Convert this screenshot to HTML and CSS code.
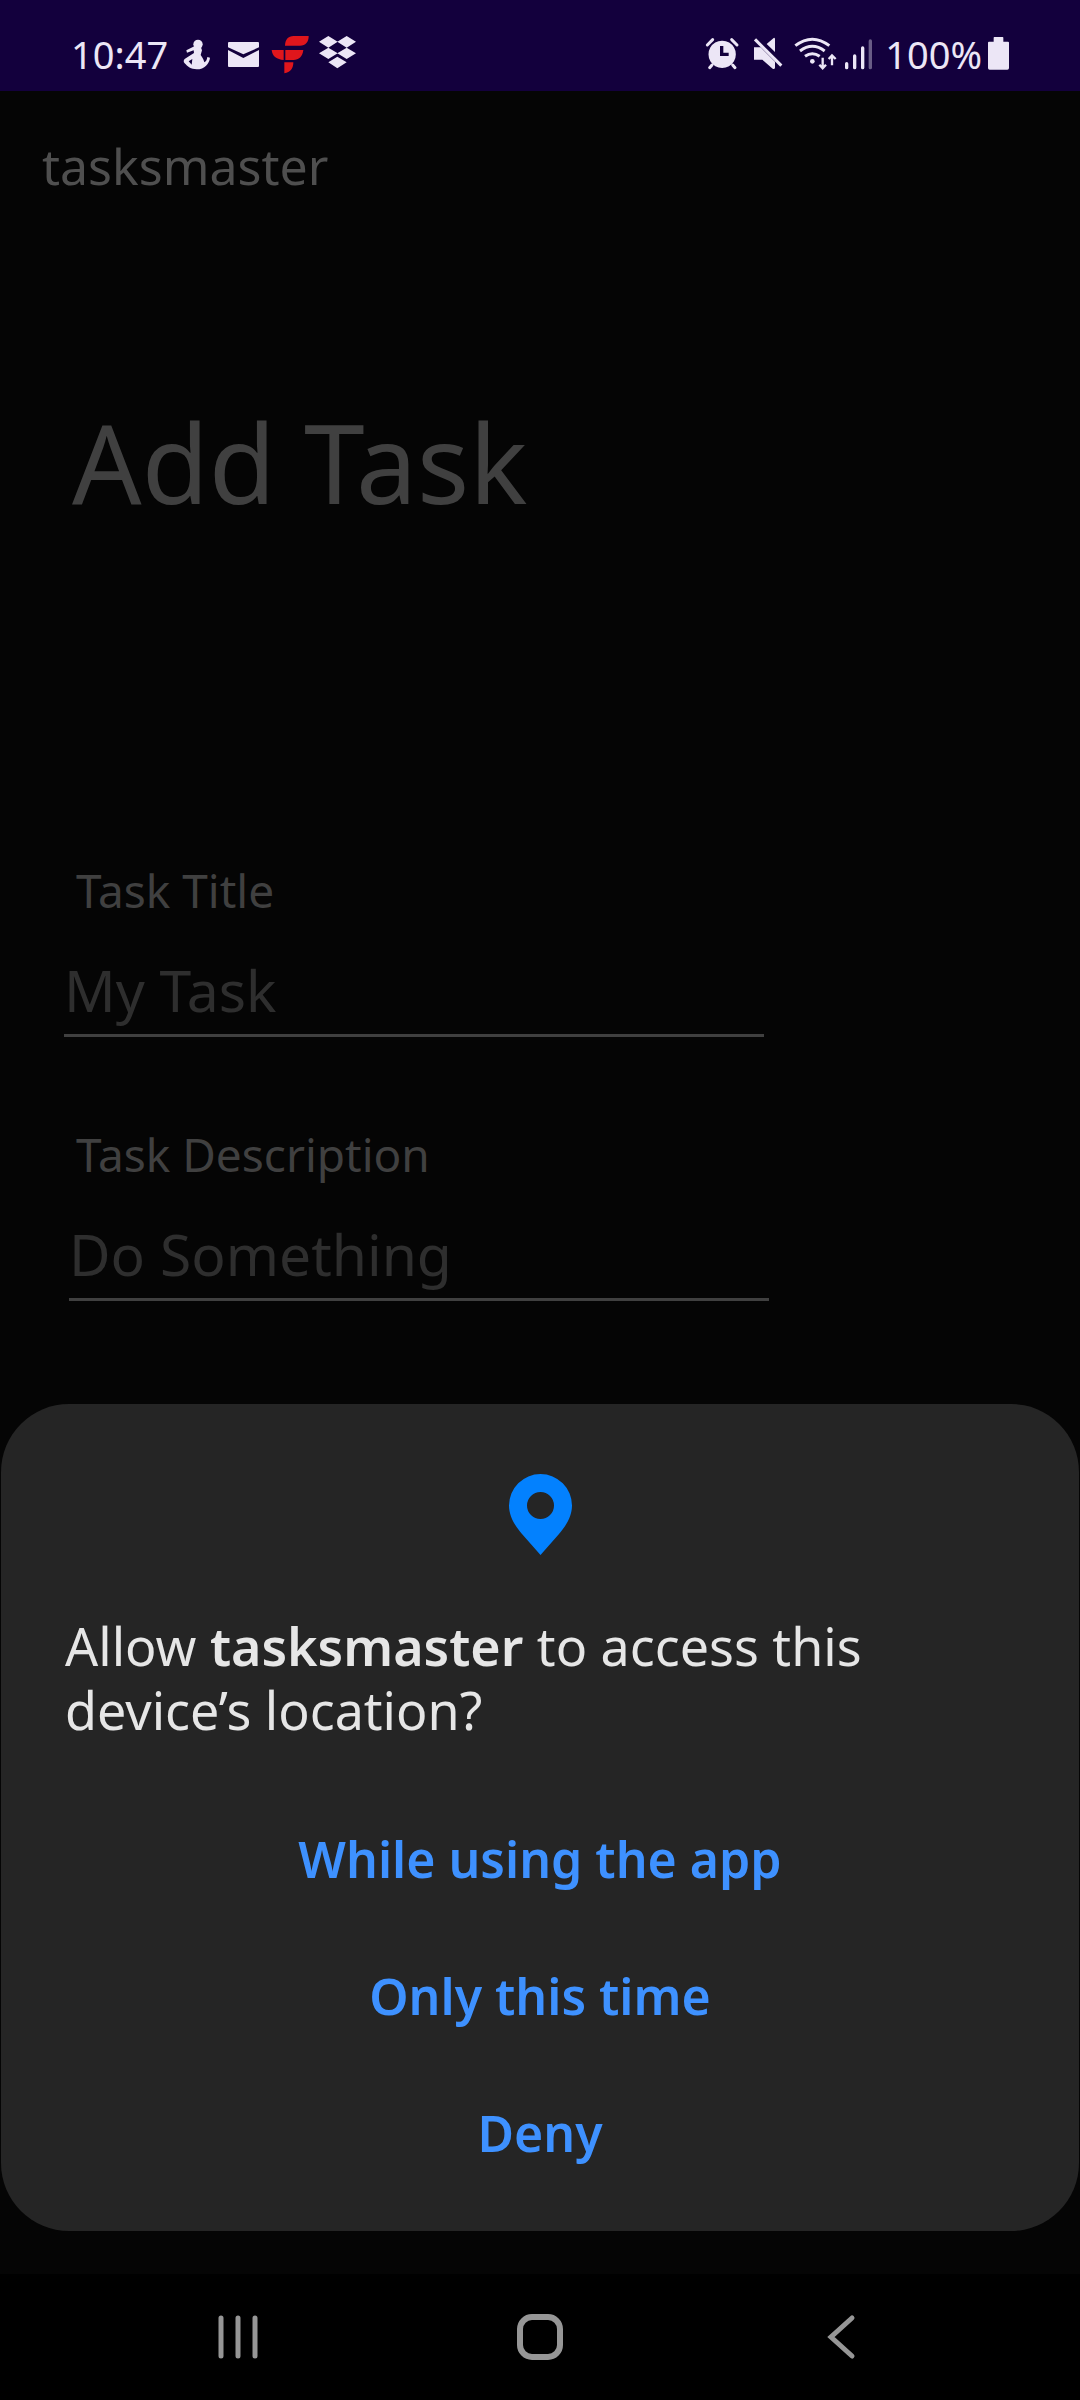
FILE: index.html
```html
<!DOCTYPE html>
<html lang="en">
<head>
<meta charset="utf-8">
<meta name="viewport" content="width=device-width, initial-scale=1">
<title>tasksmaster</title>
<link rel="stylesheet" href="styles.css">
</head>
<body>
<header class="status-bar">
  <div class="status-group">
    <time class="status-text status-time">10:47</time>
    <svg class="icon-notice" viewBox="402 99 141 123" aria-hidden="true">
      <circle cx="477" cy="133" r="14"/>
      <path d="M466 139l-24 12 2 7 20-7 1 8-27 17c-5 4-5 9-1 14 8 9 19 18 36 18 24 0 38-17 40-35l-8-2c-1 8-4 14-9 16-3-12-7-16-11-22l4-14-5-14zM449 184l11-7-2 17z" fill-rule="evenodd"/>
    </svg>
    <svg class="icon-notice" viewBox="543 99 141 123" aria-hidden="true">
      <path d="M570 126h87q3 0 3 3v13l-47 21-46-21v-13q0-3 3-3zM567 150l46 24 47-24v48q0 3-3 3h-87q-3 0-3-3z"/>
    </svg>
    <svg class="icon-notice icon-red" viewBox="684 99 141 123" aria-hidden="true">
      <path d="M738 137c1-18 9-29 26-29h45c0 18-9 29-26 29zM698 150h36v30c-20-2-34-10-36-30zM739 150h54c-2 20-14 30-29 30h-25zM736 187h27c0 19-9 30-27 33z"/>
    </svg>
    <svg class="icon-notice" viewBox="825 99 141 123" aria-hidden="true">
      <path d="M868 108l28 17-28 18-28-18zM923 108l28 17-28 18-28-18zM868 143l28 17-28 17-28-17zM923 143l28 17-28 17-28-17zM895 170l28 17-28 18-27-18z"/>
    </svg>
  </div>
  <div class="status-group">
    <svg class="icon-notice" viewBox="54 99 141 123" aria-hidden="true">
      <path d="M79 135l16-16M168 135l-16-16M93 195l-7 8M155 195l7 8" fill="none" stroke="#ece6f6" stroke-width="9" stroke-linecap="round"/>
      <path d="M123 122a41 41 0 1 0 1 0zM117 138h10v20h16v10h-26z" fill-rule="evenodd"/>
    </svg>
    <svg class="icon-mute" viewBox="195 99 135 123" aria-hidden="true">
      <path d="M219 142h20l43 43v18q-1 6-7 3l-31-27h-25zM257 132l21-18q4-2 4 4v38z"/>
      <path d="M222 118l79 79" fill="none" stroke="#ece6f6" stroke-width="9"/>
    </svg>
    <svg class="icon-wifi" viewBox="330 99 150 123" aria-hidden="true">
      <g fill="none" stroke="#ece6f6" stroke-width="9">
        <path d="M343 137q51-39 102 0M357 153q37-28 74 0M372 169q22-16 44 0"/>
        <path d="M425 173v31M415 194l10 11 10-11M453 196v-30M443 177l10-11 11 11" stroke-width="7"/>
      </g>
      <circle cx="394" cy="184" r="7"/>
    </svg>
    <svg class="icon-signal" viewBox="480 99 108 123" aria-hidden="true">
      <g fill="none" stroke="#ece6f6" stroke-width="10" stroke-linecap="round">
        <path d="M497 191v12M521 168v35M545 144v59"/><path d="M568 123v80" opacity=".4"/>
      </g>
    </svg>
    <span class="status-text status-charge">100%</span>
    <svg class="icon-battery" viewBox="924 99 63 123" aria-hidden="true">
      <path d="M941 125v-12q0-2 2-2h25q2 0 2 2v12h14q3 0 3 3v76q0 5-5 5h-53q-5 0-5-5v-76q0-3 3-3z"/>
    </svg>
  </div>
</header>

<div class="screen">
  <main class="app">
    <p class="app-name">tasksmaster</p>
    <h1 class="page-title">Add Task</h1>
    <form class="task-form">
      <div class="field">
        <label class="field-label" for="task-title">Task Title</label>
        <input class="field-input" id="task-title" type="text" placeholder="My Task">
      </div>
      <div class="field field-description">
        <label class="field-label" for="task-description">Task Description</label>
        <input class="field-input" id="task-description" type="text" placeholder="Do Something">
      </div>
    </form>
  </main>

  <section class="sheet" role="dialog" aria-labelledby="permission-message">
    <svg class="pin" viewBox="0 0 63 81" aria-hidden="true">
      <path d="M31.500 0A31.500 31.500 0 0 0 0 31.500C0 43 7 53 13 60L31.500 81 50 60C56 53 63 43 63 31.500A31.500 31.500 0 0 0 31.500 0zM31.500 18a13 13 0 1 1 0 27 13 13 0 1 1 0-27z" fill-rule="evenodd"/>
    </svg>
    <p class="message" id="permission-message">Allow <strong class="message-app">tasksmaster</strong> to access this device’s location?</p>
    <div class="choices">
      <button class="choice" type="button">While using the app</button>
      <button class="choice" type="button">Only this time</button>
      <button class="choice" type="button">Deny</button>
    </div>
  </section>
</div>

<nav class="nav-bar">
  <button class="nav-button" type="button" aria-label="Recent apps">
    <svg class="nav-icon" viewBox="0 0 48 48"><path d="M7 5v38M24 5v38M41 5v38" stroke-width="5"/></svg>
  </button>
  <button class="nav-button" type="button" aria-label="Home">
    <svg class="nav-icon" viewBox="0 0 48 48"><rect x="4" y="4" width="40" height="40" rx="12" stroke-width="6"/></svg>
  </button>
  <button class="nav-button" type="button" aria-label="Back">
    <svg class="nav-icon" viewBox="0 0 48 48"><path d="M34 5L13 24l21 19" stroke-width="5"/></svg>
  </button>
</nav>
</body>
</html>
```
FILE: styles.css
```css
* {
  box-sizing: border-box;
}

body {
  display: flex;
  flex-direction: column;
  min-height: 100vh;
  margin: 0;
  background: #050505;
  color: #4f4f4f;
  font-family: "Noto Sans", "Open Sans", sans-serif;
}

.status-bar {
  display: flex;
  align-items: center;
  justify-content: space-between;
  height: 91px;
  padding: 16px 71px 0;
  background: #13003d;
  color: #ece6f6;
}

.status-group {
  display: flex;
  align-items: center;
}

.status-group svg {
  height: 41px;
  fill: #ece6f6;
}

.status-text {
  font-size: 38px;
  line-height: 52px;
}

.status-time {
  margin-right: 5px;
}

.status-charge {
  margin: 0 6px 0 8px;
}

.icon-notice {
  width: 47px;
}

.status-group .icon-red {
  fill: #e0161c;
}

.icon-mute {
  width: 45px;
}

.icon-wifi {
  width: 50px;
}

.icon-signal {
  width: 36px;
}

.icon-battery {
  width: 21px;
}

.screen {
  position: relative;
  flex: 1;
}

.app {
  padding: 43px 42px 0;
}

.app-name {
  margin: 0;
  font-size: 50px;
  line-height: 64px;
}

.page-title {
  margin: 192px 30px 0;
  color: #404040;
  font-size: 109px;
  font-weight: 400;
  line-height: 144px;
}

.task-form {
  display: grid;
  gap: 85px;
  padding: 324px 22px 0;
}

.field {
  display: flex;
  flex-direction: column;
  gap: 30px;
}

.field-label {
  padding-left: 12px;
  color: #404040;
  font-size: 46px;
  line-height: 64px;
}

.field-input {
  width: 100%;
  max-width: 700px;
  height: 85px;
  padding: 0 0 6px;
  border: 0;
  border-bottom: 3px solid #404040;
  border-radius: 0;
  outline: 0;
  background: transparent;
  color: #4f4f4f;
  font: 57px/76px "Noto Sans", "Open Sans", sans-serif;
}

.field-input::placeholder {
  color: #2e2e2e;
  opacity: 1;
}

.field-description .field-input {
  margin-left: 5px;
}

.sheet {
  position: absolute;
  right: 1px;
  bottom: 43px;
  left: 1px;
  display: flex;
  flex-direction: column;
  padding: 70px 64px 30px;
  border-radius: 68px;
  background: #252525;
}

.pin {
  align-self: center;
  width: 63px;
  height: 81px;
  fill: #0381fe;
}

.message {
  margin: 59px 0 48px;
  color: #e6e6e6;
  font-size: 52px;
  line-height: 64px;
}

.message-app {
  font-weight: 600;
}

.choices {
  display: flex;
  flex-direction: column;
}

.choice {
  height: 137px;
  padding: 0;
  border: 0;
  background: transparent;
  color: #3e91ff;
  font: 600 50px/64px "Noto Sans", "Open Sans", sans-serif;
}

.nav-bar {
  display: flex;
  justify-content: center;
  height: 126px;
  background: #000;
}

.nav-button {
  flex: 0 1 28%;
  display: flex;
  align-items: center;
  justify-content: center;
  padding: 0;
  border: 0;
  background: transparent;
}

.nav-icon {
  width: 48px;
  height: 48px;
  fill: none;
  stroke: #969696;
  stroke-linecap: round;
}
```
